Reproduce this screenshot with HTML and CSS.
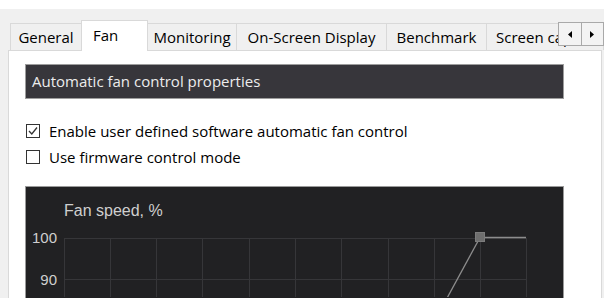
FILE: index.html
```html
<!DOCTYPE html>
<html lang="en">
<head>
    <meta charset="UTF-8">
    <title>Properties - Fan</title>
    <link rel="stylesheet" href="styles.css">
</head>
<body>
    <div class="titlestrip"></div>

    <div class="tabstrip">
        <div class="tab">General</div>
        <div class="tab active">Fan</div>
        <div class="tab">Monitoring</div>
        <div class="tab">On-Screen Display</div>
        <div class="tab">Benchmark</div>
        <div class="tab clipped">Screen capture</div>
        <div class="scroller">
            <span class="scrollbtn">
                <svg width="4" height="7" viewBox="0 0 4 7"><polygon points="4,0 4,7 0,3.5" fill="#000"/></svg>
            </span>
            <span class="scrollbtn">
                <svg width="4" height="7" viewBox="0 0 4 7"><polygon points="0,0 0,7 4,3.5" fill="#000"/></svg>
            </span>
        </div>
    </div>

    <div class="panel">
        <div class="groupbar">Automatic fan control properties</div>

        <label class="check first">
            <span class="box">
                <svg width="12" height="12" viewBox="0 0 12 12"><polyline points="2,6 4.8,9 10,2.5" fill="none" stroke="#333" stroke-width="1.3"/></svg>
            </span>
            Enable user defined software automatic fan control
        </label>
        <label class="check">
            <span class="box"></span>
            Use firmware control mode
        </label>

        <div class="graph">
            <svg width="537" height="110" viewBox="0 0 537 110">
                <g stroke="#363639" stroke-width="1">
                    <line x1="38.5" y1="51.5" x2="500.5" y2="51.5"/>
                    <line x1="38.5" y1="92.5" x2="500.5" y2="92.5"/>
                    <line x1="38.5" y1="51" x2="38.5" y2="110"/>
                    <line x1="84.5" y1="51" x2="84.5" y2="110"/>
                    <line x1="130.5" y1="51" x2="130.5" y2="110"/>
                    <line x1="176.5" y1="51" x2="176.5" y2="110"/>
                    <line x1="223.5" y1="51" x2="223.5" y2="110"/>
                    <line x1="269.5" y1="51" x2="269.5" y2="110"/>
                    <line x1="315.5" y1="51" x2="315.5" y2="110"/>
                    <line x1="362.5" y1="51" x2="362.5" y2="110"/>
                    <line x1="408.5" y1="51" x2="408.5" y2="110"/>
                    <line x1="454.5" y1="51" x2="454.5" y2="110"/>
                    <line x1="500.5" y1="51" x2="500.5" y2="110"/>
                </g>
                <text class="axis-title" x="38" y="29">Fan speed, %</text>
                <text class="axis-label" x="31" y="56" text-anchor="end">100</text>
                <text class="axis-label" x="31" y="98" text-anchor="end">90</text>
                <g stroke="#8d8d8d" stroke-width="1.3" fill="none">
                    <line x1="454" y1="50.5" x2="500" y2="50.5"/>
                    <line x1="454" y1="50.5" x2="420" y2="113"/>
                </g>
                <rect x="449.5" y="45.5" width="9" height="9" fill="#6e6e6e" stroke="#7c7c7c"/>
            </svg>
        </div>
    </div>
</body>
</html>
```

FILE: styles.css
```css
html, body {
    margin: 0;
    padding: 0;
    overflow: hidden;
}

body {
    background: #f0f0f0;
    font-family: "Open Sans", "Noto Sans", sans-serif;
    font-size: 15px;
    color: #000;
    height: 298px;
}

.titlestrip {
    height: 9px;
    background: #fff;
}

/* tab row */
.tabstrip {
    position: relative;
    display: grid;
    grid-template-columns: 72px 66px 89px 150px 100px 1fr;
    align-items: end;
    height: 30px;
    margin-top: 11px;
    padding-left: 10px;
}

.tab {
    display: flex;
    align-items: center;
    justify-content: center;
    height: 27px;
    box-sizing: border-box;
    border-top: 1px solid #d9d9d9;
    border-right: 1px solid #d9d9d9;
    background: #f0f0f0;
    white-space: nowrap;
    overflow: hidden;
}

.tab:first-child {
    border-left: 1px solid #d9d9d9;
}

.tab.active {
    position: relative;
    z-index: 1;
    height: 31px;
    margin-bottom: -1px;
    margin-left: -1px;
    border-left: 1px solid #d9d9d9;
    background: #fff;
    justify-content: flex-start;
    padding: 0 0 3px 11px;
}

.tab.clipped {
    justify-content: flex-start;
    padding-left: 9px;
}

.scroller {
    position: absolute;
    right: 0;
    top: 2px;
    display: flex;
    width: 46px;
    height: 24px;
    box-sizing: border-box;
    border: 1px solid #a9a9a9;
    background: #f3f3f3;
    z-index: 2;
}

.scrollbtn {
    flex: 1;
    display: flex;
    align-items: center;
    justify-content: center;
}

.scrollbtn + .scrollbtn {
    border-left: 1px solid #a9a9a9;
}

/* page */
.panel {
    margin-left: 8px;
    width: 594px;
    height: 248px;
    box-sizing: border-box;
    border: 1px solid #d9d9d9;
    border-bottom: none;
    background: #fff;
    padding: 13px 0 0 16px;
}

.groupbar {
    display: flex;
    align-items: center;
    width: 539px;
    height: 35px;
    box-sizing: border-box;
    border: 1px solid #9d9d9d;
    background: #37363b;
    color: #ececec;
    padding: 0 0 1px 6px;
}

.check {
    display: flex;
    align-items: center;
    height: 20px;
    margin-top: 6px;
    margin-left: 1px;
}

.check.first {
    margin-top: 22px;
}

.box {
    display: flex;
    align-items: center;
    justify-content: center;
    width: 14px;
    height: 14px;
    box-sizing: border-box;
    border: 1px solid #333;
    background: #fff;
    margin-right: 9px;
}

.graph {
    width: 539px;
    height: 112px;
    margin-top: 19px;
    box-sizing: border-box;
    border: 1px solid #9a9a9a;
    border-bottom: none;
    background: #212123;
}

.graph svg {
    display: block;
}

.axis-title,
.axis-label {
    font-family: "Liberation Sans", Arial, sans-serif;
    font-size: 15px;
    fill: #cfcfcf;
}

.axis-title {
    font-size: 16px;
}
```
